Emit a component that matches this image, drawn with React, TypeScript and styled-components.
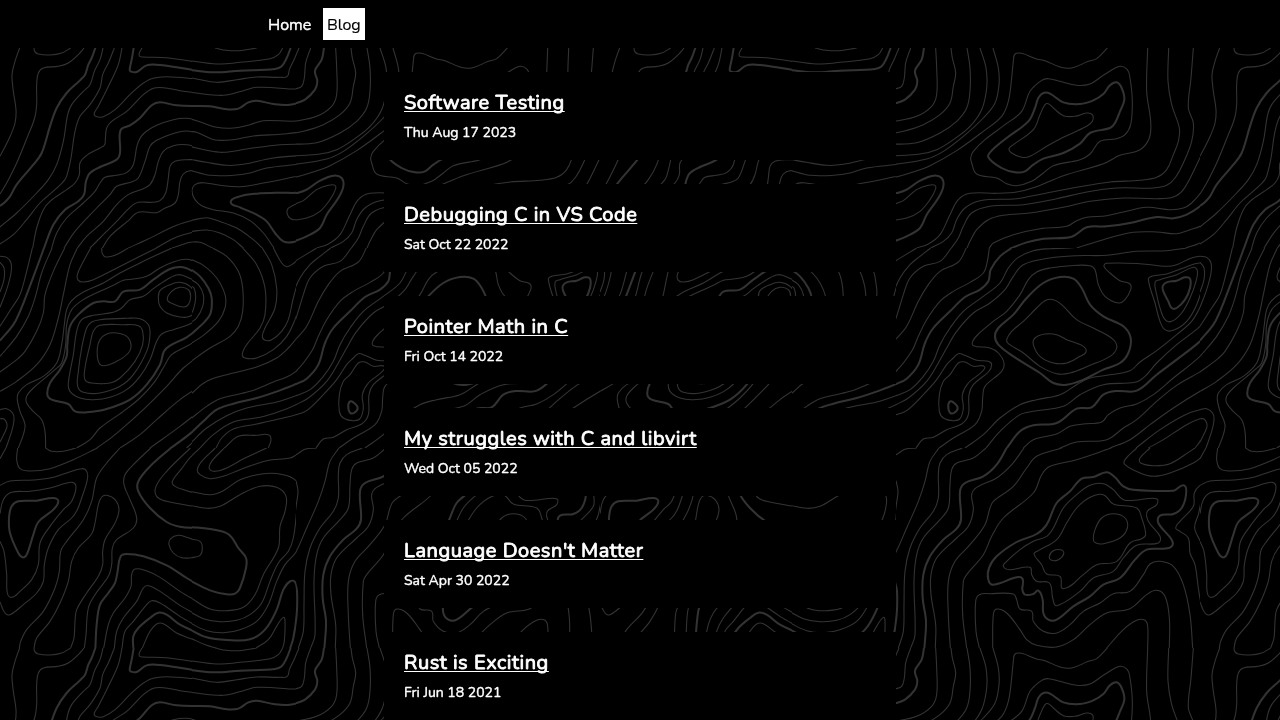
import React from 'react';
import styled, { createGlobalStyle } from 'styled-components';

const Global = createGlobalStyle`
  * { box-sizing: border-box; }
  html { background: #000; }
  body {
    margin: 0;
    color: #fff;
    font-family: Nunito, Lato, "Open Sans", sans-serif;
    font-size: 16px;
    line-height: 24px;
  }
`;

const Page = styled.div`
  height: 720px;
  overflow: hidden;
`;

const Backdrop = styled.svg`
  position: fixed;
  inset: 0;
  width: 100%;
  height: 100%;
  z-index: -1;
`;

const Header = styled.header`
  height: 48px;
  padding: 8px 0 8px 264px;
  background: #000;
`;

const Nav = styled.nav`
  display: flex;
  gap: 8px;
`;

const NavLink = styled.a<{ $active?: boolean; $width: number }>`
  width: ${(p) => p.$width}px;
  height: 32px;
  padding: 5px 4px 3px;
  white-space: nowrap;
  color: ${(p) => (p.$active ? '#000' : '#fff')};
  background: ${(p) => (p.$active ? '#fff' : 'transparent')};
  -webkit-text-stroke: ${(p) => (p.$active ? 0.15 : 0.4)}px currentColor;
`;

const Posts = styled.main`
  display: flex;
  flex-direction: column;
  gap: 24px;
  width: 512px;
  margin: 24px auto 0;
`;

const Post = styled.article`
  height: 88px;
  padding: 17px 20px 15px;
  background: #000;
`;

const Title = styled.h2`
  margin: 0;
  height: 30px;
  font-size: 20px;
  line-height: 28px;
  font-weight: 400;
  letter-spacing: 0.53px;
  -webkit-text-stroke: 0.85px currentColor;
  text-decoration: underline;
  text-decoration-thickness: 1px;
  text-underline-offset: 2px;
  text-decoration-skip-ink: none;
`;

const PostDate = styled.p`
  margin: 4px 0 0;
  font-size: 14px;
  line-height: 20px;
  -webkit-text-stroke: 0.4px currentColor;
`;

/* Contour lines. Each sheet covers part of the 600px tile on a grid of three
   units per pixel. "!" marks an index contour, "z" a closed ring. */
type Sheet = { x: number; y: number; from: number; to: number; lines: string };

const sheets: Sheet[] = [
  {
    x: 0, y: 0, from: 0, to: 576,
    lines: `
59,0 45,40 36,80 40,130 48,185 45,225 28,270 0,325
102,0 104,10 115,18 150,21 185,15 212,0
252,0 235,20 205,45 175,55 130,60 115,75 110,110 110,170 104,210 85,260 50,345 20,405 0,438
! 286,0 275,30 265,50 255,80 240,97 200,135 170,180 150,235 125,315 100,350 50,410 30,445 15,462 0,474
309,0 300,35 283,70 270,110 250,130 215,170 203,200 190,280 170,350 145,395 110,435 50,495 0,537
343,0 325,45 308,80 300,120 270,170 240,205 225,250 213,330 204,370 195,395 165,425 120,465 80,515 40,560 0,588
366,0 355,50 330,105 295,175 283,195 287,205 310,206 345,185 400,130 450,94 500,86 600,94
! 401,0 395,35 389,65 393,71 410,72 440,52 480,51 600,69
426,0 418,15 419,25 430,27 500,29 600,44
600,136 540,128 490,119 460,121 430,140 380,190 335,220 320,240 316,275 314,290 300,300 260,322 240,345 238,380 225,405 200,425 150,460 130,485 110,540 98,600
! 600,174 530,172 480,163 455,172 420,210 390,232 365,242 359,260 360,315 350,335 300,357 270,375 258,400 252,440 235,460 195,485 160,530 132,600
600,218 560,211 520,215 470,232 430,258 412,290 400,350 380,374 350,382 315,388 300,405 285,430 250,465 200,510 170,555 155,600
600,257 560,249 525,255 470,277 450,295 435,340 415,390 395,402 350,415 330,440 290,480 225,550 192,600
600,300 560,290 520,293 490,310 475,340 465,380 450,410 430,422 385,440 350,470 310,520 260,565 232,600
600,336 560,335 525,340 510,355 505,390 497,435 480,458 455,463 415,463 390,478 350,520 300,570 270,600
600,374 570,368 550,378 540,400 535,440 525,465 490,483 470,494 415,493 385,518 330,565 306,602
600,405 583,410 577,430 585,455 600,470
385,600 440,575 530,532 600,511
468,600 530,567 600,547
516,600 570,583 600,580`,
  },
  {
    x: 190, y: 0, from: 6, to: 318,
    lines: `
75,0 110,7 150,8 200,0
278,0 265,20 240,32 150,43 80,48 0,38
! 302,0 290,30 275,55 255,63 150,68 70,73 0,66
327,0 312,35 298,65 292,85 270,88 200,87 140,95 80,103 0,89
362,0 347,45 342,90 335,115 320,123 260,120 200,118 160,128 100,142 0,133
! 402,0 395,35 375,68 382,100 375,125 345,155 300,170 250,168 200,158 175,163 145,182 110,184 60,175 0,174
437,0 440,60 440,140 425,175 380,205 320,219 220,218 180,230 130,240 80,238 40,225 0,212
483,0 497,75 480,165 450,200 400,230 340,250 280,258 190,264 130,275 75,276 40,262 20,253 0,250
530,0 540,130 450,255 380,284 270,290 170,303 100,313 50,307 0,295
0,334 50,343 110,352 160,349 250,330 380,318 420,308
0,367 60,382 130,382 180,375 230,360 330,348 430,330
400,368 310,387 220,405 150,416 90,412 40,404 15,410 6,430 15,455 35,473 70,485 130,495 180,518 220,555 252,600
! 122,462 150,445 200,437 270,434 325,434 350,425 390,398 430,383 455,390 460,415 445,450 410,500 390,540 350,565 310,582 280,580 255,555 230,520 200,500 150,478 z
437,415 415,412 380,425 340,458 310,472 293,483 294,503 310,515 350,510 390,490 420,455 z
0,518 50,509 80,517 140,540 190,575 217,600
0,551 50,546 90,555 130,575 160,600
0,582 30,583 68,600`,
  },
  {
    x: 290, y: 0, from: 18, to: 930,
    lines: `
27,0 12,35 0,60
62,0 47,45 43,90 35,115 18,122 0,124
! 102,0 95,35 75,68 82,100 75,125 45,155 18,165 -10,169
137,0 140,60 140,140 125,175 80,205 18,219 0,219
183,0 187,30 197,75 190,115 180,165 150,200 100,230 40,250 0,257
231,0 240,60 240,130 230,180 200,220 150,255 80,284 0,289
270,0 288,60 290,120 275,185 240,235 190,275 140,305 90,318 0,324
309,0 325,60 327,110 315,165 280,210 220,265 160,310 110,333 0,351
652,0 620,32 595,40 545,60 510,57 465,38 440,33 395,16 375,18 370,40 365,90 355,160 335,205 280,250 200,308 120,353 60,375 0,392
245,345 242,330 250,310 285,275 345,230 395,190 420,130 455,97 475,92 510,100 560,112 600,108 640,82 690,55 712,65 720,90 727,160 722,230 705,260 680,272 630,280 600,318 570,335 490,353 460,375 425,400 380,413 350,407 320,390 260,378 z
! 295,328 305,308 350,270 415,220 435,180 445,150 460,135 480,137 520,163 570,168 610,157 640,138 660,112 680,103 695,120 703,155 690,190 675,225 660,240 600,255 570,287 520,315 460,332 430,350 405,370 375,373 335,360 z
357,302 370,290 430,245 450,200 465,170 475,167 490,180 520,203 555,205 590,195 607,200 607,220 590,235 520,268 470,295 420,325 395,328 365,315 z
773,0 770,130 782,220 778,270 750,305 690,322 640,347 520,383 435,418 380,432 320,436 240,436 205,455 180,500 150,560 115,588 80,600
836,0 834,100 845,170 868,240 865,280 850,320 830,365 800,388 750,397 660,402 560,418 460,437 380,452 270,458 225,480 200,515 185,555 160,580 122,600
910,0 903,90 895,180 910,225 905,280 880,345 855,390 830,412 790,420 680,420 590,432 500,452 400,470 300,475 245,495 220,535 205,570 184,600
960,265 920,350 880,425 850,447 800,452 700,450 600,460 520,478 420,495 340,502 295,515 260,545 240,580 231,600
960,382 935,430 905,465 880,480 840,485 770,478 700,492 650,503 590,508 560,518 530,535 450,542 370,560 310,585 298,600
! 360,602 410,583 460,572 545,566 590,538 650,535 720,525 800,507 850,511 890,500 930,475 960,445
560,600 640,575 730,553 800,552 860,557 900,545 930,535 960,513
887,600 925,587 960,567
! 0,437 25,434 50,425 90,398 130,383 155,390 160,415 145,450 110,500 90,540 50,565 -10,588
-10,492 18,467 40,458 80,425 115,412 135,412 136,425 120,455 90,490 50,510 0,518`,
  },
  {
    x: 0, y: 200, from: 0, to: 576,
    lines: `
0,25 20,28 33,45 33,75 20,125 0,178
0,43 12,60 12,95 0,132
97,0 80,70 60,140 35,180 0,235
! 132,0 110,60 80,140 60,190 40,230 0,278
156,0 125,75 105,150 85,205 50,265 0,325
194,0 160,70 135,140 130,195 110,250 75,310 50,335 0,372
232,0 210,50 190,140 175,210 150,290 110,350 50,400 0,430
272,0 245,50 232,80 235,97 250,102 280,95 370,50 470,0
305,0 307,17 318,27 345,22 385,0
516,0 430,40 360,75 310,105 250,132 215,158 200,185 193,230 185,290 170,345 130,385 80,410 55,435 52,455 60,490 75,530 70,560 55,600
600,45 560,34 520,42 480,60 440,85 400,93 370,97 340,112 300,130 250,155 215,185 200,230 197,290 185,345 165,365 100,420 80,445 80,465 100,490 125,515 135,550 137,600
! 600,82 550,58 510,63 460,95 420,125 370,131 345,160 310,160 280,165 235,200 210,235 202,290 200,325 180,365 150,405 142,440 155,455 205,468 225,490 260,493 320,483 390,455 440,410 480,350 492,310 510,293 560,268 600,238
600,108 570,91 535,80 500,95 460,122 430,145 390,155 365,180 340,193 280,202 245,215 230,250 220,320 205,405 210,430 240,450 280,455 330,448 380,425 420,385 450,335 470,280 485,258 520,245 570,228 600,205
475,150 480,128 510,110 540,103 570,115 585,140 585,185 570,205 540,207 500,195 480,175 z
502,155 515,130 540,118 565,125 572,145 565,170 550,177 520,168 z
300,215 380,211 420,212 445,230 450,260 440,310 400,380 360,415 300,435 250,433 233,415 235,370 245,300 260,240 275,222 z
300,232 370,230 415,233 428,250 428,290 405,340 360,390 330,405 275,405 255,395 255,360 270,290 280,250 z
292,300 300,275 320,258 350,255 380,265 393,290 385,315 350,340 310,353 295,340 z
600,270 560,295 515,320 495,350 465,400 420,450 370,490 300,540 270,575 230,600
600,322 550,360 500,415 440,475 380,530 335,568 290,600
600,415 540,455 470,515 420,560 360,600
600,488 540,535 450,600
! 600,533 560,565 510,602
600,563 560,600
0,485 20,482 38,495 42,515 35,550 18,600
0,512 12,513 20,525 20,540 0,582`,
  },
  {
    x: 190, y: 200, from: 6, to: 318,
    lines: `
0,33 40,52 80,90 105,140 105,180 85,220 40,262 0,288
! 0,62 30,85 55,120 65,150 62,195 45,220 0,262
0,93 25,110 40,140 38,175 20,210 0,225
0,113 12,120 17,150 10,185 0,203
68,0 110,25 145,70 158,120 158,190 145,235 120,265 60,300 0,342
158,0 200,50 225,120 225,200 210,240 170,290 157,318 165,330 200,330 250,305 290,265 315,215 330,170 350,130
217,0 245,50 260,120 255,180 225,240 217,265 225,277 245,275 275,250 295,215 310,150 330,90 370,40
250,0 275,45 290,56 305,50 330,30 350,20
0,440 50,400 110,380 200,357 260,330 295,300 318,273 350,235
0,514 50,475 90,452 180,430 250,402 290,387 318,370 350,335
! 0,558 40,520 80,485 130,467 200,450 270,427 318,408 350,390
0,587 50,540 110,503 170,480 260,462 318,443 340,432
30,600 70,560 130,522 210,508 270,490 318,470 350,450
78,600 95,570 130,543 200,528 280,510 318,500 350,488
103,600 145,565 200,562 235,560 243,575 235,600`,
  },
  {
    x: 290, y: 200, from: 18, to: 930,
    lines: `
80,0 18,38 0,50
122,0 90,25 60,50 30,90 5,145
184,0 150,40 100,55 60,90 40,140 18,210 0,250
229,0 205,42 150,70 115,110 85,160 50,235 18,273 0,290
298,0 292,40 280,75 240,103 190,130 150,160 110,215 85,265 65,310 18,370 -10,385
! 365,0 330,25 302,65 295,100 270,125 225,147 180,190 130,240 105,285 85,350 50,392 18,408 0,415
600,-8 540,0 480,2 430,8 385,28 355,60 330,105 280,145 220,190 180,240 150,290 130,340 100,385 60,425 18,443 0,450
890,0 830,8 740,10 650,22 560,23 480,30 400,50 370,85 345,125 300,165 250,195 200,250 170,300 145,345 110,400 55,450 18,470 0,478
147,600 190,570 255,530 275,490 278,450 285,415 335,370 342,345 325,315 300,300 250,293 248,280 265,258 310,220 350,190 390,140 415,95 440,72 480,60 540,53 600,53 615,65 625,110 645,145 685,165 705,155 722,125 720,108 690,98 660,75 642,55 650,46 750,47 830,55 860,50 905,30 940,25 960,40
0,505 18,500 50,488 100,440 140,395 170,350 190,330 205,317 225,322 260,337 295,340 305,350 295,372 250,410 237,440 235,500 215,528 170,545 130,568 100,573 78,600
205,345 225,342 250,355 283,355 275,372 235,405 217,440 220,480 210,512 190,518 160,510 148,490 148,440 160,400 180,380 z
! 178,462 190,463 203,480 192,495 180,494 175,480 z
! 315,265 325,240 370,200 410,150 460,105 510,87 550,92 575,120 600,170 640,205 700,235 722,270 715,315 690,345 640,365 580,395 530,410 490,405 450,375 370,325 325,290 z
350,275 365,250 400,220 440,180 465,158 490,155 515,170 560,215 620,245 670,275 680,300 660,325 600,352 540,375 500,377 450,355 400,315 355,287 z
430,290 435,270 465,258 500,260 530,275 580,295 588,312 570,325 530,345 490,345 450,325 z
775,95 785,85 830,78 880,60 930,45 942,60 938,110 920,170 890,220 850,247 825,245 810,220 795,165 z
795,103 810,95 860,80 910,58 922,68 918,100 900,150 875,195 845,220 825,215 810,180 800,140 z
! 818,115 830,103 860,98 885,88 900,92 900,120 885,155 860,180 845,180 835,160 820,130 z
950,125 930,178 905,220 860,260 800,308 750,342 720,368 650,382 600,390 560,410 510,440 440,455 390,470 330,510 280,560 225,600
960,195 930,235 860,290 800,345 765,385 735,403 640,410 570,440 520,475 430,490 390,500 330,550 288,600
! 349,602 390,550 430,532 500,525 560,482 605,478 640,440 680,429 740,428 800,380 860,335 930,280 960,245
960,285 930,325 850,390 790,440 740,468 690,480 655,500 635,522 580,528 540,535 500,558 430,575 400,600
960,355 930,372 860,412 800,460 740,515 700,540 650,575 560,582 510,600
960,415 930,430 850,480 780,530 720,575 660,600
960,487 930,485 880,503 810,545 738,600
775,600 820,575 890,530 930,512 945,512 950,535 930,580 915,600`,
  },
  {
    x: 0, y: 400, from: 0, to: 576,
    lines: `
18,0 0,32
53,0 50,35 60,62 90,69 150,62 220,35 292,0
137,0 155,10 190,10 228,0
360,0 320,45 290,90 275,160 250,215 200,280 182,310 178,370 165,420 130,490 80,545 62,580 58,600
0,112 30,99 100,96 150,90 200,75 245,62 260,70 262,95 245,150 232,185 215,210 175,245 145,300 133,350 130,400 110,435 70,470 30,500 15,495 0,462
0,197 10,155 35,133 90,130 150,120 215,103 228,115 215,160 190,185 150,235 120,285 115,350 95,395 60,430 35,448 22,435 20,380 12,310 0,280
102,600 110,570 150,520 180,465 205,400 215,340 235,300 275,258 285,225 295,170 305,147 320,142 345,155 357,185 345,225 315,275 308,310 308,350 295,385 260,435 230,485 225,520 222,570 212,600
452,0 400,50 375,80 372,110 390,155 410,210 400,240 350,275 337,300 335,350 325,385 285,440 265,480 258,560 253,600
! 55,160 110,158 160,150 175,160 160,185 115,222 100,260 80,320 68,328 55,315 30,255 27,210 35,175 z
! 515,-2 450,55 415,100 415,130 450,180 500,222 540,236 600,240
571,0 500,70 468,115 470,145 500,160 600,178
600,2 570,29 545,62 517,100 525,115 560,128 600,138
600,47 592,62 600,75
! 286,602 290,530 300,470 325,435 345,405 352,375 362,325 380,318 430,325 500,352 560,390 600,413
600,282 560,268 535,262 512,272 507,290 520,315 545,329 580,329 600,323
311,600 325,530 340,495 375,450 393,415 395,380 405,363 435,367 480,388 540,430 600,465
343,600 350,550 370,510 410,460 430,420 445,413 480,430 540,472 600,505
366,600 375,550 400,520 440,470 455,458 480,465 540,505 600,540
! 400,602 400,565 415,540 450,510 475,494 500,500 540,530 600,557
427,600 450,550 470,528 490,527 530,555 600,582`,
  },
  {
    x: 190, y: 400, from: 6, to: 318,
    lines: `
0,28 30,0
76,0 35,40 22,65 30,80 60,92 100,85 150,65 230,38 300,30 320,20
103,0 65,40 58,62 75,70 110,60 165,30 230,0
0,130 60,140 100,128 150,95 220,77 280,80 318,98 325,130 320,190 310,270 295,310 265,345 240,400 215,465 180,500 140,517 90,521 40,512 0,491
0,172 50,181 90,175 150,140 210,115 260,118 288,145 285,190 270,235 265,300 220,380 195,440 160,478 110,488 60,483 0,448
350,240 318,312 285,350 260,400 235,470 200,520 150,545 100,554 50,548 0,525
! 0,545 50,568 110,576 180,574 225,545 260,485 280,425 300,400 315,402 321,430 320,500 310,570 300,602
0,570 50,592 80,600
198,600 235,575 260,535 280,508 285,520 283,580 278,600
0,273 30,280 37,300 30,322 0,330
! 0,237 60,243 105,253 125,268 145,300 168,330 168,360 150,420 135,437 110,439 60,427 0,398`,
  },
  {
    x: 290, y: 400, from: 18, to: 930,
    lines: `
0,25 18,20 45,4 80,0
12,220 19,170 24,130 18,98
! 15,402 21,430 20,500 10,570
147,0 120,40 105,100 85,160 50,240 18,312 0,340
217,0 170,20 150,45 145,80 145,150 130,190 90,240 60,300 45,370 42,470 40,550 25,600
288,0 250,30 200,45 185,65 180,110 175,180 150,215 100,270 80,320 72,400 75,560 62,600
! 351,-2 320,50 280,85 225,105 210,130 213,215 200,242 160,275 120,325 100,380 98,450 108,520 103,602
402,0 365,50 320,90 260,118 245,140 250,185 235,235 200,270 140,330 123,380 123,440 137,530 136,600
515,0 440,25 410,60 370,115 310,160 300,180 285,230 240,290 195,340 175,400 175,500 181,600
664,0 560,35 480,55 455,80 430,135 340,210 305,265 280,320 230,380 220,400 218,500 230,600
780,0 750,30 752,45 790,53 840,47 900,10 915,0
740,0 705,35 705,50 750,75 790,85 840,75 910,45 935,25 947,0
! 295,395 297,360 320,325 380,282 440,258 470,230 500,165 540,130 575,92 610,87 650,73 675,88 700,115 730,125 850,128 882,112 888,140 875,180 850,198 810,203 805,225 845,275 845,295 820,302 770,305 735,335 690,390 640,410 600,445 550,475 500,515 475,515 460,495 458,455 445,428 430,438 405,440 397,425 398,393 380,388 310,410 z
340,355 350,340 390,305 430,280 470,265 490,240 520,180 560,140 600,112 640,107 670,125 700,155 750,155 800,152 800,170 772,190 775,220 810,265 805,285 740,292 700,330 670,370 610,390 570,430 500,473 488,450 478,405 440,400 425,380 420,358 360,365 z
432,318 445,308 500,275 530,225 560,180 600,148 640,140 670,168 740,180 755,210 767,260 755,272 720,285 680,340 620,350 580,380 520,422 510,385 470,378 455,350 z
610,275 615,245 635,210 670,197 705,210 712,240 690,270 640,287 618,285 z
478,325 490,308 515,306 521,318 505,335 485,337 z
268,600 258,550 257,460 268,440 300,437 370,438 380,455 390,483 425,490 430,520 460,550 500,555 540,530 580,490 630,465 670,437 720,430 760,380 780,348 810,340 850,355 880,410 900,500 908,600
308,600 310,500 320,483 350,495 390,545 410,575 440,592 500,597 550,575 600,530 650,495 720,482 770,440 800,427 825,445 838,510 838,600
650,600 700,545 740,517 765,517 773,535 773,600
960,100 930,112 913,135 910,175 870,220 857,240 870,250 895,270 900,315 915,350 925,420 935,475 945,498 960,502
960,138 940,145 925,200 914,240 935,290 945,350 948,420 960,448`,
  },
];

/* Smooth curve through all points (Catmull-Rom converted to Béziers). */
const toPath = (source: string) => {
  const closed = source.endsWith('z');
  const p = source
    .replace(/[!z]/g, '')
    .trim()
    .split(/\s+/)
    .map((pair) => pair.split(',').map(Number));
  const n = p.length;
  const at = (i: number) => (closed ? p[(i + n) % n] : p[Math.max(0, Math.min(n - 1, i))]);
  let d = `M${p[0]}`;
  for (let i = 0; i < (closed ? n : n - 1); i++) {
    const [a, b, c, e] = [at(i - 1), at(i), at(i + 1), at(i + 2)];
    const span = Math.hypot(c[0] - b[0], c[1] - b[1]);
    const before = Math.hypot(c[0] - a[0], c[1] - a[1]) || 1;
    const after = Math.hypot(e[0] - b[0], e[1] - b[1]) || 1;
    const k = span * 0.36;
    d += `C${b[0] + ((c[0] - a[0]) / before) * k},${b[1] + ((c[1] - a[1]) / before) * k} ${c[0] - ((e[0] - b[0]) / after) * k},${c[1] - ((e[1] - b[1]) / after) * k} ${c}`;
  }
  return d + (closed ? 'Z' : '');
};

const Contours = () => (
  <Backdrop aria-hidden="true">
    <defs>
      <pattern id="contours" y="48" width="600" height="600" patternUnits="userSpaceOnUse">
        {sheets.map((s) => (
          <svg
            key={`${s.x}-${s.y}`}
            x={s.x + s.from / 3}
            y={s.y}
            width={(s.to - s.from) / 3}
            height="200"
            viewBox={`${s.from} 0 ${s.to - s.from} 600`}
            fill="none"
            stroke="#333"
          >
            {s.lines.trim().split('\n').map((line) => (
              <path key={line} d={toPath(line)} strokeWidth={line.startsWith('!') ? 6 : 3.2} />
            ))}
          </svg>
        ))}
      </pattern>
    </defs>
    <rect width="100%" height="100%" fill="url(#contours)" />
  </Backdrop>
);

const posts = [
  { title: 'Software Testing', date: 'Thu Aug 17 2023' },
  { title: 'Debugging C in VS Code', date: 'Sat Oct 22 2022' },
  { title: 'Pointer Math in C', date: 'Fri Oct 14 2022' },
  { title: 'My struggles with C and libvirt', date: 'Wed Oct 05 2022' },
  { title: "Language Doesn't Matter", date: 'Sat Apr 30 2022' },
  { title: 'Rust is Exciting', date: 'Fri Jun 18 2021' },
];

export default function App() {
  return (
    <Page>
      <Global />
      <Contours />
      <Header>
        <Nav>
          <NavLink $width={51}>Home</NavLink>
          <NavLink $active $width={42}>Blog</NavLink>
        </Nav>
      </Header>
      <Posts>
        {posts.map((post) => (
          <Post key={post.title}>
            <Title>{post.title}</Title>
            <PostDate>{post.date}</PostDate>
          </Post>
        ))}
      </Posts>
    </Page>
  );
}
